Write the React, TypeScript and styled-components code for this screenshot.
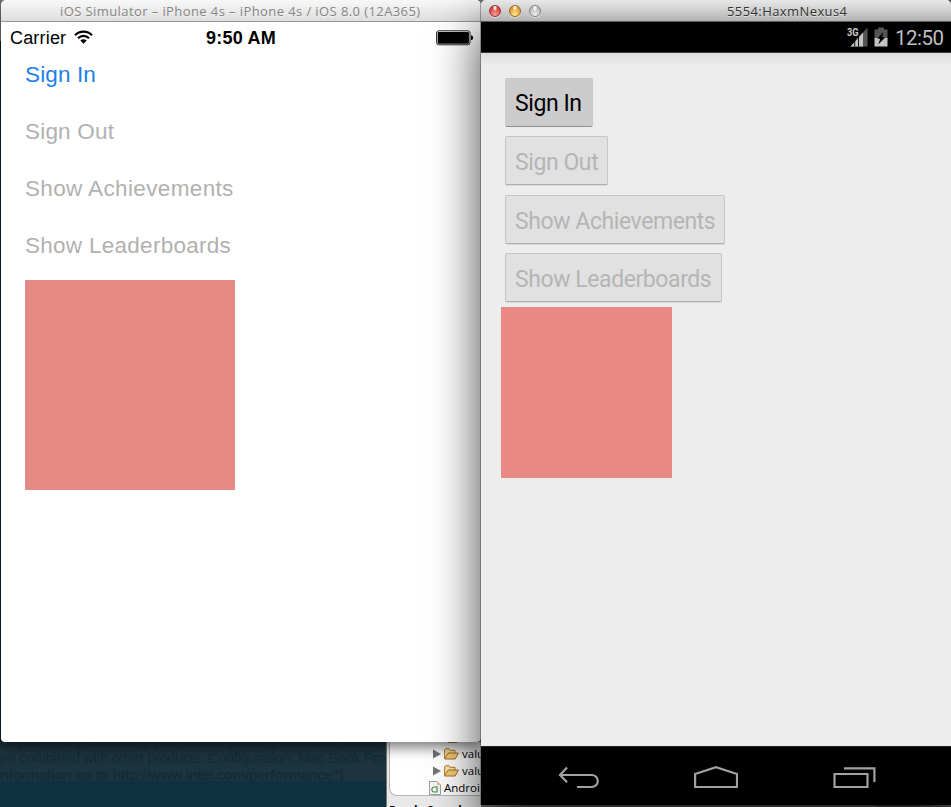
import React from "react";
import styled, { createGlobalStyle } from "styled-components";

const Global = createGlobalStyle`
  * { box-sizing: border-box; }
  body { margin: 0; overflow: hidden; }
  svg { display: block; flex: none; }
`;

const Desktop = styled.main`
  width: 951px;
  height: 807px;
  display: grid;
  grid-template-columns: 481px 470px;
  overflow: hidden;
  background: linear-gradient(90deg, #777 876px, #555 0);
`;

const LeftColumn = styled.div`
  display: flex;
  flex-direction: column;
  min-width: 0;
  height: 807px;
  padding-left: 1px;
  background: linear-gradient(#777 0 41px, #0b202b 41px 742px, #1a303b 742px 781px, #0f3040 781px);
`;

const SimulatorWindow = styled.section`
  position: relative;
  z-index: 1;
  height: 742px;
  flex: none;
  background: #fff;
  border-radius: 5px 5px 4px 4px;
  overflow: hidden;
  box-shadow: 0 5px 14px rgba(0, 0, 0, 0.55);
`;

const TitleBar = styled.header<{ $active?: boolean }>`
  height: 22px;
  flex: none;
  display: flex;
  align-items: center;
  padding-left: ${(p) => (p.$active ? 8 : 59)}px;
  border-bottom: 1px solid ${(p) => (p.$active ? "#5c5c5c" : "#969696")};
  border-radius: 5px 5px 0 0;
  background: ${(p) =>
    p.$active
      ? "linear-gradient(#e8e8e8, #cfcfcf 50%, #b2b2b2)"
      : "linear-gradient(#f8f8f8, #dedede)"};
`;

const Title = styled.h1<{ $active?: boolean }>`
  margin: 0 0 0 ${(p) => (p.$active ? 186 : 0)}px;
  font: 400 13px/20px "Lucida Grande", "Open Sans", sans-serif;
  letter-spacing: 0.41px;
  color: ${(p) => (p.$active ? "#333" : "#848484")};
  text-shadow: 0 1px 0 rgba(255, 255, 255, 0.5);
  white-space: nowrap;
`;

const IosStatus = styled.div`
  height: 32px;
  display: grid;
  grid-template-columns: 196px 230px 44px;
  align-items: center;
  padding-left: 9px;
  font: 18px/32px "Liberation Sans", sans-serif;
  color: #000;
`;

const Carrier = styled.div`
  display: flex;
  align-items: center;
  gap: 8px;
  letter-spacing: 0.18px;
`;

const Clock = styled.div`
  font-weight: 700;
  letter-spacing: 0.22px;
`;

const IosMenu = styled.nav`
  display: flex;
  flex-direction: column;
  align-items: flex-start;
  padding-left: 24px;
`;

const IosButton = styled.button<{ $spacing: number }>`
  height: 57px;
  padding: 0 0 15px;
  border: 0;
  background: none;
  font: 22.5px/42px "Liberation Sans", sans-serif;
  letter-spacing: ${(p) => p.$spacing}px;
  color: #1c80ea;
  white-space: nowrap;
  &:disabled { color: #b1b1b1; }
`;

const Square = styled.div<{ $size: number; $platform: "ios" | "android" }>`
  width: ${(p) => p.$size}px;
  height: ${(p) => p.$size}px;
  margin-left: ${(p) => (p.$platform === "ios" ? 24 : 20)}px;
  margin-top: ${(p) => (p.$platform === "ios" ? -2 : 0)}px;
  background: ${(p) => (p.$platform === "ios" ? "#e48984" : "#e88984")};
`;

const Background = styled.div`
  height: 65px;
  display: grid;
  grid-template-columns: 385px 95px;
`;

const Notice = styled.div`
  height: 65px;
  overflow: hidden;
  background: #0f3040;
`;

const NoticeText = styled.div`
  height: 39px;
  overflow: hidden;
  background: #1d343f;
  color: #122c39;
  font: 14.4px/18px "Liberation Sans", sans-serif;
  white-space: nowrap;
`;

const NoticeLine = styled.p<{ $bold?: boolean; $shift: number; $spacing: number }>`
  margin: ${(p) => p.$shift}px 0 0 -1px;
  font-weight: ${(p) => (p.$bold ? 700 : 400)};
  letter-spacing: ${(p) => p.$spacing}px;
`;

const FilePanel = styled.aside`
  overflow: hidden;
  padding-left: 2px;
  background: #e9e9e9;
  border-left: 1px solid #777;
  font: 11.5px/17px "Lucida Grande", "Open Sans", sans-serif;
  color: #000;
`;

const Tree = styled.div`
  height: 54px;
  overflow: hidden;
  background: #fff;
  border: solid #b5b5b5;
  border-width: 0 0 1px 1px;
  border-bottom-left-radius: 8px;
`;

const TreePeek = styled.div`
  width: 9px;
  height: 1px;
  margin: 0 0 2px 58px;
  background: #b8802f;
`;

const TreeRow = styled.div<{ $indent: number }>`
  height: 17px;
  display: flex;
  align-items: center;
  gap: 3px;
  padding-left: ${(p) => p.$indent}px;
  white-space: nowrap;
  font-weight: 500;
`;

const PanelCaption = styled.div`
  padding-top: 6px;
  font-weight: 700;
  white-space: nowrap;
`;

const EmulatorWindow = styled.section`
  position: relative;
  z-index: 2;
  height: 805px;
  display: flex;
  flex-direction: column;
  background: #ededed;
  border-radius: 5px 5px 0 0;
  box-shadow: -1px 0 0 rgba(70, 70, 70, 0.45), 0 25px 50px rgba(0, 0, 0, 0.75);
`;

const Lights = styled.div`
  display: flex;
  gap: 8px;
`;

const Light = styled.span<{ $edge: string; $dark: string; $bright: string }>`
  width: 12px;
  height: 12px;
  border: 1px solid ${(p) => p.$edge};
  border-radius: 50%;
  background:
    radial-gradient(ellipse at 50% 14%, rgba(255, 255, 255, 0.85) 0 12%, transparent 34%),
    radial-gradient(circle at 50% 85%, ${(p) => p.$bright}, ${(p) => p.$dark} 75%);
  box-shadow: 0 1px 0 rgba(255, 255, 255, 0.5);
`;

const AndroidStatus = styled.div`
  height: 31px;
  flex: none;
  display: flex;
  justify-content: flex-end;
  align-items: center;
  padding: 1px 7px 0 0;
  border-bottom: 1px solid #3a3838;
  background: #000;
  color: #bfbfbf;
  font: 20.5px/30px Roboto, sans-serif;
`;

const StatusIcons = styled.div`
  display: flex;
  gap: 6px;
  margin-right: 7px;
`;

const AndroidTime = styled.span`
  width: 49px;
  letter-spacing: -0.5px;
  white-space: nowrap;
`;

const AndroidContent = styled.div`
  flex: 1;
  display: flex;
  flex-direction: column;
  background: linear-gradient(#dedede, #ededed 13px);
`;

const AndroidMenu = styled.nav`
  height: 254px;
  display: flex;
  flex-direction: column;
  align-items: flex-start;
  gap: 9.6px;
  padding: 24.5px 0 0 24px;
`;

const AndroidButton = styled.button<{ $width: number }>`
  width: ${(p) => p.$width}px;
  height: 49px;
  flex: none;
  padding: 2px 0 0 9px;
  border: 1px solid #c9c9c9;
  border-bottom-color: #8f8f8f;
  border-radius: 2px;
  background: #ccc;
  color: #000;
  font: 23px/45px Roboto, sans-serif;
  letter-spacing: -0.42px;
  text-align: left;
  white-space: nowrap;
  &:disabled {
    padding-top: 3px;
    background: #e1e1e1;
    border-color: #c6c6c6;
    border-bottom-color: #b0b0b0;
    box-shadow: 0 1px 0 #d9d9d9;
    color: #b5b5b5;
  }
`;

const NavBar = styled.footer`
  height: 59px;
  flex: none;
  display: flex;
  align-items: center;
  gap: 94px;
  padding: 3px 0 0 77px;
  background: #000;
  border-top: 1px solid #222;
`;

const Wifi = () => (
  <svg width="19" height="16" viewBox="0 0 19 16">
    <path d="M1 5.2A12 12 0 0 1 18 5.2M4 8.2A7.7 7.7 0 0 1 15 8.2" fill="none" stroke="#000" strokeWidth="2.2" />
    <path d="M6.3 10.5Q9.5 7.8 12.7 10.5L9.5 13.8Z" fill="#000" />
  </svg>
);

const IosBattery = () => (
  <svg width="38" height="16" viewBox="0 0 38 16">
    <rect x="0.6" y="0.8" width="33.4" height="14" rx="2.2" fill="#fff" stroke="#222" />
    <rect x="1.7" y="1.9" width="31.2" height="11.8" rx="1" fill="#000" />
    <path d="M35 5.2Q37.2 5.4 37.2 7.7T35 10.2Z" fill="#000" />
  </svg>
);

const Triangle = () => (
  <svg width="8" height="10" viewBox="0 0 8 10">
    <path d="M0 0.5L8 5L0 9.5Z" fill="#747474" />
  </svg>
);

const Folder = () => (
  <svg width="15" height="12" viewBox="0 0 15 12">
    <path d="M0.6 10.5V2L1.6 0.7H5L6.2 2.3H11V5" fill="#fae7ac" stroke="#b37725" />
    <path d="M0.7 11L4 5H14.4L11.2 11Z" fill="#f5cb78" stroke="#ad701d" />
  </svg>
);

const AndroidFile = () => (
  <svg width="12" height="14" viewBox="0 0 12 14">
    <path d="M0.5 0.5H8L11.5 4V13.5H0.5Z" fill="#f5f8fb" stroke="#91a0b3" />
    <path d="M8 0.5V4H11.5Z" fill="#f1b777" />
    <path d="M8 5.2V11H5.3A2.5 2.5 0 1 1 5.3 6H8.5" fill="none" stroke="#4b8f38" strokeWidth="1.2" />
  </svg>
);

const Signal = () => (
  <svg width="21" height="21" viewBox="0 0 21 21">
    <path d="M20.5 0.5V19.5H3.5Z" fill="#555" />
    <path d="M3.5 19.5L16 5.5V19.5Z" fill="#c4c4c4" />
    <path d="M7.7 13.5V19.5M11.5 9.5V19.5" stroke="#000" strokeWidth="0.9" />
    <path d="M0 0H11.8V9H0Z" fill="#000" />
    <text x="0" y="8.6" fontFamily="Roboto" fontSize="10.5" fontWeight="700" fill="#ccc" textLength="11.5" lengthAdjust="spacingAndGlyphs">3G</text>
  </svg>
);

const Charging = () => (
  <svg width="14" height="20" viewBox="0 0 14 20">
    <path d="M0.5 2.5H4V0.5H10V2.5H13.5V12H0.5Z" fill="#555" />
    <path d="M0.5 11H13.5V19.5H0.5Z" fill="#c4c4c4" />
    <path d="M9.5 5L3.5 11.4L6.2 12.1L4.2 17.5L11 10.7L8.2 9.8Z" fill="#000" />
  </svg>
);

const Back = () => (
  <svg width="42" height="24" viewBox="0 0 42 24">
    <path d="M9 1.5L2 9L9 16.2M2.5 9H33.8A5.9 5.9 0 0 1 33.8 21H19" fill="none" stroke="#a2a2a2" strokeWidth="2.2" />
  </svg>
);

const Home = () => (
  <svg width="44" height="24" viewBox="0 0 44 24">
    <path d="M1.1 21V8L22 1.2L43 8V21Z" fill="none" stroke="#a2a2a2" strokeWidth="2.2" />
  </svg>
);

const Recent = () => (
  <svg width="44" height="24" viewBox="0 0 44 24">
    <path d="M2.5 8H35.5V21H2.5ZM12 2.4H42.4V16" fill="none" stroke="#a2a2a2" strokeWidth="2.2" />
  </svg>
);

const actions = [
  { label: "Sign In", ios: 0.12, android: 88, enabled: true },
  { label: "Sign Out", ios: 0.2, android: 103, enabled: false },
  { label: "Show Achievements", ios: 0.36, android: 220, enabled: false },
  { label: "Show Leaderboards", ios: 0.28, android: 217, enabled: false },
];

export default function App() {
  return (
    <>
      <Global />
      <Desktop>
        <LeftColumn>
          <SimulatorWindow>
            <TitleBar>
              <Title>iOS Simulator – iPhone 4s – iPhone 4s / iOS 8.0 (12A365)</Title>
            </TitleBar>
            <IosStatus>
              <Carrier>Carrier <Wifi /></Carrier>
              <Clock>9:50 AM</Clock>
              <IosBattery />
            </IosStatus>
            <IosMenu>
              {actions.map((a) => (
                <IosButton key={a.label} $spacing={a.ios} disabled={!a.enabled}>{a.label}</IosButton>
              ))}
            </IosMenu>
            <Square $size={210} $platform="ios" />
          </SimulatorWindow>
          <Background>
            <Notice>
              <NoticeText>
                <NoticeLine $shift={-10} $spacing={-0.25}>ist you in fully evaluating your contemplated purchases, includ</NoticeLine>
                <NoticeLine $shift={-1} $spacing={-0.24}>en combined with other products. Configuration: Mac Book Pro</NoticeLine>
                <NoticeLine $shift={-1} $spacing={-0.36} $bold>nformation go to http://www.intel.com/performance"]</NoticeLine>
              </NoticeText>
            </Notice>
            <FilePanel>
              <Tree>
                <TreePeek />
                <TreeRow $indent={43}><Triangle /><Folder />valu</TreeRow>
                <TreeRow $indent={43}><Triangle /><Folder />valu</TreeRow>
                <TreeRow $indent={39}><AndroidFile />Androi</TreeRow>
              </Tree>
              <PanelCaption>Ready Search</PanelCaption>
            </FilePanel>
          </Background>
        </LeftColumn>
        <EmulatorWindow>
          <TitleBar $active>
            <Lights>
              <Light $edge="#963939" $dark="#d33438" $bright="#ff9b91" />
              <Light $edge="#98672a" $dark="#dd9129" $bright="#ffe889" />
              <Light $edge="#868686" $dark="#b5b5b5" $bright="#ededed" />
            </Lights>
            <Title $active>5554:HaxmNexus4</Title>
          </TitleBar>
          <AndroidStatus>
            <StatusIcons><Signal /><Charging /></StatusIcons>
            <AndroidTime>12:50</AndroidTime>
          </AndroidStatus>
          <AndroidContent>
            <AndroidMenu>
              {actions.map((a) => (
                <AndroidButton key={a.label} $width={a.android} disabled={!a.enabled}>{a.label}</AndroidButton>
              ))}
            </AndroidMenu>
            <Square $size={171} $platform="android" />
          </AndroidContent>
          <NavBar><Back /><Home /><Recent /></NavBar>
        </EmulatorWindow>
      </Desktop>
    </>
  );
}
